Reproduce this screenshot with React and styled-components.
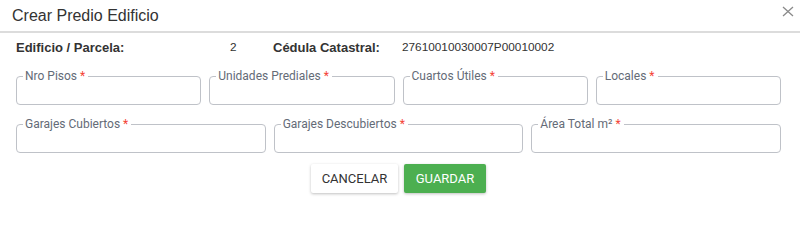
import React from 'react';
import styled, { createGlobalStyle } from 'styled-components';

const Global = createGlobalStyle`
  body {
    margin: 0;
    background: #fff;
    font-family: Roboto, "Liberation Sans", Arial, sans-serif;
  }
`

const Dialog = styled.div`
  width: 800px;
  height: 208px;
  background: #fff;
`

const Header = styled.div`
  height: 31px;
  display: flex;
  align-items: center;
  justify-content: space-between;
  padding: 0 6px 0 12px;
  border-bottom: 2px solid #dcdcdc;
`

const Title = styled.h2`
  margin: 0;
  font-family: "Liberation Sans", Arial, sans-serif;
  font-weight: 400;
  font-size: 16px;
  color: #333;
`

const Close = styled.button`
  align-self: flex-start;
  margin-top: 6px;
  border: 0;
  background: none;
  padding: 0;
  width: 12px;
  height: 11px;
  display: flex;
  cursor: pointer;
`

const Body = styled.div`
  padding: 0 19px 0 16px;
`

const Info = styled.div`
  display: grid;
  grid-template-columns: 214px 43px 129px 1fr;
  align-items: center;
  height: 26px;
  margin-top: 1px;
  font-family: "Liberation Sans", Arial, sans-serif;
  color: #333;
`

const InfoLabel = styled.span`
  font-weight: 700;
  font-size: 13px;
`

const InfoValue = styled.span`
  font-size: 11.8px;
`

const Row = styled.div`
  display: grid;
  grid-template-columns: repeat(${p => p.cols}, 1fr);
  gap: 8px;
  margin-top: ${p => p.top}px;
`

const Field = styled.fieldset`
  margin: 0;
  padding: 0;
  border: 1px solid #bfc2c8;
  border-radius: 4px;
  min-width: 0;
`

const Legend = styled.legend`
  margin-left: 6px;
  padding: 0 3px 0 2px;
  font-size: 12px;
  line-height: 14px;
  color: #646b77;
`

const Req = styled.span`
  color: #f44336;
`

const Input = styled.input`
  display: block;
  width: 100%;
  box-sizing: border-box;
  height: 21px;
  border: 0;
  outline: none;
  background: transparent;
  padding: 0 8px;
  font: inherit;
`

const Actions = styled.div`
  display: flex;
  justify-content: center;
  gap: 6px;
  margin-top: 11px;
`

const Button = styled.button`
  height: 29px;
  width: ${p => p.w}px;
  border: 0;
  border-radius: 2px;
  font-family: Roboto, "Liberation Sans", Arial, sans-serif;
  font-size: 13px;
  text-transform: uppercase;
  background: ${p => (p.primary ? '#4caf50' : '#fff')};
  color: ${p => (p.primary ? '#fff' : '#333')};
  box-shadow: 0 1px 3px rgba(0, 0, 0, 0.25);
  cursor: pointer;
`

const row1 = ['Nro Pisos', 'Unidades Prediales', 'Cuartos Útiles', 'Locales']
const row2 = ['Garajes Cubiertos', 'Garajes Descubiertos', 'Área Total m²']

function TextField({ label }) {
  return (
    <Field>
      <Legend>
        {label} <Req>*</Req>
      </Legend>
      <Input />
    </Field>
  )
}

export default function App() {
  return (
    <Dialog>
      <Global />
      <Header>
        <Title>Crear Predio Edificio</Title>
        <Close aria-label="Cerrar">
          <svg width="12" height="11" viewBox="0 0 12 11">
            <path d="M1 1 L11 10 M11 1 L1 10" stroke="#8a8a8a" strokeWidth="1.3" />
          </svg>
        </Close>
      </Header>
      <Body>
        <Info>
          <InfoLabel>Edificio / Parcela:</InfoLabel>
          <InfoValue>2</InfoValue>
          <InfoLabel>Cédula Catastral:</InfoLabel>
          <InfoValue>27610010030007P00010002</InfoValue>
        </Info>
        <Row cols={4} top={9}>
          {row1.map(l => <TextField key={l} label={l} />)}
        </Row>
        <Row cols={3} top={12}>
          {row2.map(l => <TextField key={l} label={l} />)}
        </Row>
        <Actions>
          <Button w={87}>Cancelar</Button>
          <Button primary w={82}>Guardar</Button>
        </Actions>
      </Body>
    </Dialog>
  )
}
